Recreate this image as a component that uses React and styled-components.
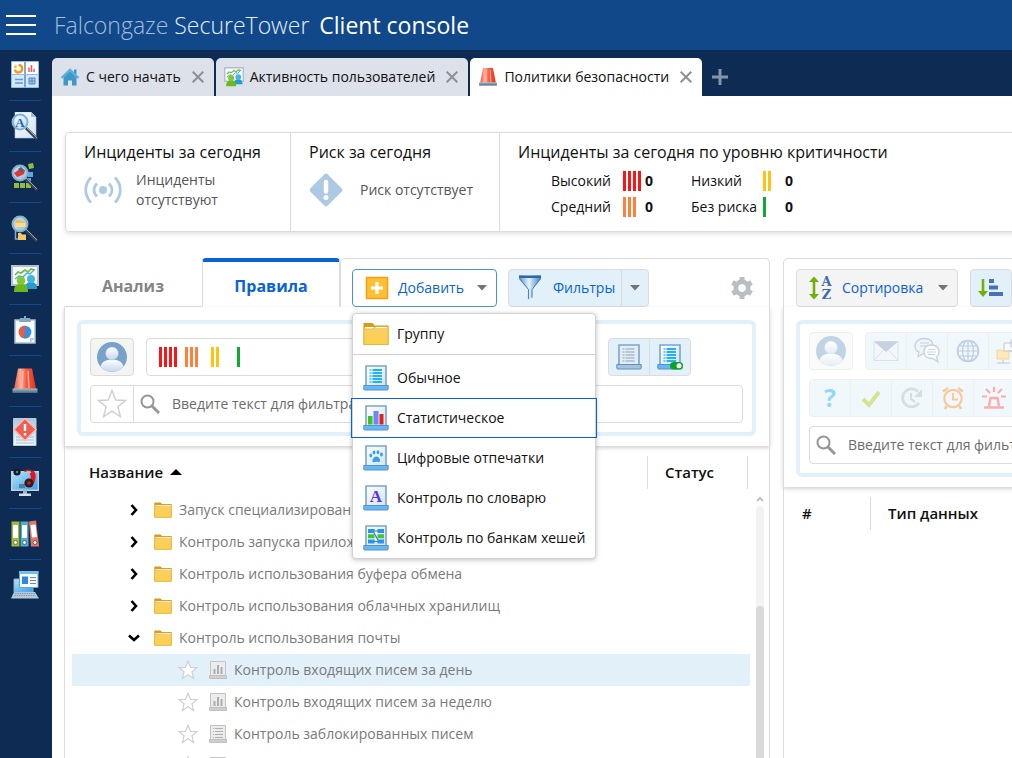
import {useState} from 'react';

import styled, {createGlobalStyle} from 'styled-components';

const colors = {
  header: '#10488a',
  navy: '#0e2c53',
  blue: '#0a62d8',
  pale: '#e2f0fa',
  line: '#dcdcdc',
  grey: '#7a7a7a',
  red: '#fb1616',
  orange: '#ff8039',
  yellow: '#ffc20e',
  green: '#0fab2f'
};

const GlobalStyle = createGlobalStyle`
  * {
    box-sizing: border-box;
  }
  body {
    margin: 0;
    overflow: hidden;
    font-family: 'Open Sans', 'Noto Sans', sans-serif;
    font-size: 14px;
    line-height: 20px;
    color: #111;
  }
  button, input {
    font: inherit;
    color: inherit;
  }
  button {
    padding: 0;
    border: 0;
    background: none;
    cursor: pointer;
  }
  svg {
    display: block;
    flex: none;
  }
`;

/* ---------- Icons ---------- */

const Svg = ({size = 28, box = 28, children}) => (
  <svg width={size} height={size} viewBox={`0 0 ${box} ${box}`} fill="none" aria-hidden="true">
    {children}
  </svg>
);

const HiddenSvg = styled.svg`
  position: absolute;
`;

const Defs = () => (
  <HiddenSvg width="0" height="0" aria-hidden="true">
    <defs>
      <linearGradient id="paper" x1="0" y1="0" x2="0" y2="1">
        <stop offset="0" stopColor="#a9c8e4" />
        <stop offset="1" stopColor="#f6fafd" />
      </linearGradient>
      <linearGradient id="sheet" x1="0" y1="0" x2="1" y2="1">
        <stop offset="0" stopColor="#ffffff" />
        <stop offset="1" stopColor="#cfe3f4" />
      </linearGradient>
      <linearGradient id="lens" x1="0" y1="0" x2="1" y2="1">
        <stop offset="0" stopColor="#f3fafe" />
        <stop offset="1" stopColor="#b5dcf4" />
      </linearGradient>
      <linearGradient id="folder" x1="0" y1="0" x2="0" y2="1">
        <stop offset="0" stopColor="#f6cf6a" />
        <stop offset="1" stopColor="#ffd04a" />
      </linearGradient>
      <linearGradient id="siren" x1="0" y1="0" x2="1" y2="0">
        <stop offset="0" stopColor="#f4553a" />
        <stop offset=".3" stopColor="#ffb09c" />
        <stop offset=".55" stopColor="#ff5b3f" />
        <stop offset="1" stopColor="#e23420" />
      </linearGradient>
      <linearGradient id="metal" x1="0" y1="0" x2="0" y2="1">
        <stop offset="0" stopColor="#9fc0d0" />
        <stop offset="1" stopColor="#47697c" />
      </linearGradient>
      <linearGradient id="screen" x1="0" y1="0" x2="1" y2="1">
        <stop offset="0" stopColor="#b8e2fb" />
        <stop offset="1" stopColor="#2fa0ea" />
      </linearGradient>
      <linearGradient id="funnel" x1="0" y1="0" x2="1" y2="0">
        <stop offset="0" stopColor="#5b96cc" />
        <stop offset=".45" stopColor="#e4f2fc" />
        <stop offset="1" stopColor="#3f7fbd" />
      </linearGradient>
      <linearGradient id="bust" x1="0" y1="0" x2="0" y2="1">
        <stop offset="0" stopColor="#ffffff" />
        <stop offset="1" stopColor="#c9d6ea" />
      </linearGradient>
    </defs>
  </HiddenSvg>
);

const Lens = ({cx = 9, cy = 10, r = 7.5}) => (
  <>
    <path d={`M${cx + 6} ${cy + 6}L26 27`} stroke="#3c4650" strokeWidth="3" />
    <path d={`M${cx + 6} ${cy + 5}L26 26`} stroke="#98a5b0" strokeWidth="1" />
    <circle cx={cx} cy={cy} r={r} fill="url(#lens)" fillOpacity=".85" stroke="#83b2d0" strokeWidth="2" />
  </>
);

const DashboardIcon = () => (
  <Svg>
    <path d="M1 1h12.500v12H1zM14.500 1H27v12H14.500z" fill="#fff" />
    <path d="M1 14h12.500v12H1zM14.500 14H27v12H14.500z" fill="#d5e7fa" />
    <path d="M.5 .5h27v26H.5zM14 1v25M1 13.500h26" stroke="#8dbdea" />
    <path d="M7.500 4a3.700 3.700 0 1 1-3.600 4.500" stroke="#f79a1a" strokeWidth="2.400" />
    <path d="M3.900 7A3.700 3.700 0 0 1 5.500 4.600" stroke="#f8c043" strokeWidth="2.400" />
    <path d="M18 6.500V11M20.500 4v7M23 8v3" stroke="#ee5663" strokeWidth="1.500" />
    <path d="M4 18.500h8M4 22h8" stroke="#5c9bd8" strokeWidth="1.400" />
    <path d="M18 17h6v6h-6zM18 20h6M21 17v6" stroke="#4c88c7" fill="#a8cdf0" />
  </Svg>
);

const SearchDocIcon = () => (
  <Svg>
    <path d="M4 0h16l5 5v21H4z" fill="url(#sheet)" stroke="#a9c3d8" strokeWidth=".6" />
    <path d="M20 0v5h5z" fill="#9dbfda" />
    <Lens />
    <text x="9" y="14.500" textAnchor="middle" fontFamily="Liberation Serif, serif" fontSize="13" fontWeight="700" fill="#2763b3">A</text>
  </Svg>
);

const SearchBlocksIcon = () => (
  <Svg>
    <path d="M3 20h5v5H3zM9 20h5v5H9zM15 20h5v5h-5zM17 1l5-1 1 5-5 1z" fill="#93bb3d" />
    <path d="M17 9h5v5h-5zM15 15h5v4h-5z" fill="#5fa5dd" />
    <Lens />
    <path d="M3 10l6-4 5 1-1 4-4 2-3 1z" fill="#e0372f" />
    <path d="M7 6l3-2 3 3-3 2z" fill="#4b627b" />
  </Svg>
);

const SearchFolderIcon = () => (
  <Svg>
    <path d="M4.500 12v13h4" stroke="#86adc9" strokeWidth="1.500" />
    <path d="M7 19h3l1 1.500h4V26H7z" fill="#f4ca66" />
    <Lens />
    <path d="M4.500 6h4l1 1.500h5V13h-10z" fill="#eebd4b" />
    <path d="M4.500 9h10v4h-10z" fill="#ffdc87" />
  </Svg>
);

const ActivityIcon = ({size}) => (
  <Svg size={size}>
    <path d="M1 1h26v19H1z" fill="#f4f9fd" stroke="#b3bfd0" strokeWidth="2" />
    <path d="M4 10l3-3 3 1 4-3 3 2 3-3 4 1" stroke="#74bb31" strokeWidth="1.600" />
    <path d="M4 14l4-3 4 1 4-4 3 1 4-4" stroke="#46b2de" strokeWidth="1.400" />
    <path d="M14 24c0-5 2-7 6-7s6 2 6 7z" fill="#259bcf" />
    <circle cx="20" cy="14" r="4" fill="#48b3e0" />
    <path d="M3 27c0-6 2-8 7-8s7 2 7 8z" fill="#6db71d" />
    <circle cx="10" cy="15.500" r="4.300" fill="#83c932" />
  </Svg>
);

const ReportIcon = () => (
  <Svg>
    <path d="M4 4h20v23H4z" fill="#fbfdff" stroke="#a9bfd2" strokeWidth="1.500" />
    <path d="M9 2h4V0h2v2h4l1 4H8z" fill="#84a8c4" />
    <circle cx="14" cy="16" r="6.300" fill="#2d93ea" />
    <path d="M14 9.700v6.300l4.500 4.400A6.300 6.300 0 1 1 14 9.700z" fill="#ef5a41" />
    <path d="M14 9.700v6.300l-1 6.300A6.300 6.300 0 0 0 18.500 20.400L20.300 16z" fill="#2d93ea" />
    <path d="M19 27v-5h5z" fill="#b8cbdc" />
  </Svg>
);

const SirenIcon = ({size}) => (
  <Svg size={size}>
    <path d="M7 1.500h14L25 22H3z" fill="url(#siren)" />
    <path d="M12 4l-1 17M17 4l1 17" stroke="#ffc2b3" strokeWidth="1.200" />
    <path d="M1.500 21.500h25V26h-25z" fill="url(#metal)" />
  </Svg>
);

const AlertDocIcon = () => (
  <Svg>
    <path d="M2.500 .5h22.500v27H2.500z" fill="url(#paper)" stroke="#b9c9d8" />
    <path d="M5 19h18M5 22h18M5 25h18" stroke="#9cbfdf" />
    <path d="M14 .5L25 11.500 14 22.500 3 11.500z" fill="#ef5f50" stroke="#fbb9b1" strokeWidth="1.400" />
    <path d="M14 6v7M14 15v2.500" stroke="#fff" strokeWidth="2.400" />
  </Svg>
);

const MonitorIcon = () => (
  <Svg>
    <path d="M.7 2.700h26.600v18.600H.7z" fill="url(#screen)" stroke="#c3d0da" strokeWidth="1.400" />
    <path d="M12 21h4v4h-4z" fill="#9fb3c1" />
    <path d="M8 24.500h12V27H8z" fill="#d6e0e8" />
    <circle cx="6" cy="3" r="3.600" fill="#151b22" />
    <circle cx="6" cy="3" r="1.200" fill="#4d86a6" />
    <path d="M8 15h6v4H8z" fill="#4d7f9f" />
    <path d="M13.500 2.500C17 .5 21 1 22.500 4.500" stroke="#b8252b" strokeWidth="1.600" />
    <path d="M20.500 3c3 3.500 1.500 9-1.500 13" stroke="#ee1119" strokeWidth="5" />
    <circle cx="18" cy="14" r="4.600" fill="#3c1714" />
    <circle cx="18" cy="14" r="1.800" fill="#a3362e" />
  </Svg>
);

const BindersIcon = () => (
  <Svg>
    <path d="M.5 1.500h8v25h-8z" fill="#a4b83a" />
    <path d="M9.500 1.500h8v25h-8z" fill="#50aecf" />
    <path d="M18 1.500l7-1 3 26h-8z" fill="#e2766a" />
    <path d="M2 5h5v13H2zM11 5h5v13h-5zM19.500 5l5-.6 1.500 12.600-5 .5z" fill="#fff" />
    <circle cx="4.500" cy="22.500" r="2" fill="#fff" stroke="#6c7c3a" />
    <circle cx="13.500" cy="22.500" r="2" fill="#fff" stroke="#386f88" />
    <circle cx="24" cy="22.500" r="2" fill="#fff" stroke="#93473f" />
  </Svg>
);

const LaptopIcon = () => (
  <Svg>
    <path d="M3 8h19v13H3z" fill="url(#screen)" stroke="#8eabc1" />
    <path d="M3 21h21l4 6.500H0z" fill="#b4c9da" />
    <path d="M4 22.500h20M3.500 24.500h21" stroke="#7f9bb2" strokeDasharray="1.500 .8" />
    <path d="M8.500 .5h18.500v16H8.500z" fill="#f7fbfe" stroke="#63a6de" />
    <path d="M8 0h19.500v3H8z" fill="#77bbef" />
    <path d="M11 5.500h6V13h-6z" fill="#2f86e0" />
    <path d="M19 6.500h6M19 9.500h6M19 12.500h6" stroke="#74899c" strokeWidth="1.200" />
  </Svg>
);

const HomeIcon = () => (
  <Svg size={20} box={20}>
    <path d="M14 2.500h2.500V7H14zM3.500 10L10 4l6.500 6v8.500h-4.500v-5H8v5H3.500z" fill="#3f98c6" />
    <path d="M1.500 11L10 3l8.500 8" stroke="#5db0da" strokeWidth="2.400" />
  </Svg>
);

const CloseIcon = () => (
  <Svg size={12} box={12}>
    <path d="M.7 .7l10.600 10.600M11.300 .7L.7 11.300" stroke="#8d8f93" strokeWidth="2" />
  </Svg>
);

const PlusIcon = () => (
  <Svg size={16} box={16}>
    <path d="M8 0v16M0 8h16" stroke="#8594a9" strokeWidth="3" />
  </Svg>
);

const SignalIcon = () => (
  <svg width="38" height="28" viewBox="0 0 38 28" fill="none" stroke="#adc9e3" strokeWidth="2.800" aria-hidden="true">
    <circle cx="19" cy="14" r="4" fill="#adc9e3" stroke="none" />
    <path d="M13 7.500c-4 4-4 9 0 13M25 7.500c4 4 4 9 0 13M7 1.500c-7 7-7 18 0 25M31 1.500c7 7 7 18 0 25" />
  </svg>
);

const RiskIcon = () => (
  <Svg size={34} box={34}>
    <path d="M15.500 1.200q1.500-1.200 3 0L32.800 15.500q1.200 1.500 0 3L18.500 32.800q-1.500 1.200-3 0L1.200 18.500q-1.200-1.500 0-3z" fill="#adc9e3" />
    <path d="M17 9v9.500" stroke="#fff" strokeWidth="4.500" strokeLinecap="round" />
    <circle cx="17" cy="24.500" r="2.500" fill="#fff" />
  </Svg>
);

const AddIcon = () => (
  <Svg size={24} box={24}>
    <path d="M1.500 1.500h21v21h-21z" fill="#ffc12f" stroke="#f3a01c" strokeWidth="1.600" />
    <path d="M12 6v12M6 12h12" stroke="#fff" strokeWidth="3.200" />
  </Svg>
);

const FunnelIcon = () => (
  <svg width="22" height="26" viewBox="0 0 22 26" fill="none" aria-hidden="true">
    <path d="M0 .5h22v3.500L13.500 14.500v8L10 25.500l-1.500-1V14.500L0 4z" fill="url(#funnel)" />
    <path d="M0 .5h22V3H0z" fill="#2e68a8" />
    <path d="M1 4l8.500 10.500V24M21 4l-8 10.500v8" stroke="#4482bd" />
  </svg>
);

const CaretIcon = ({color = '#737373'}) => (
  <svg width="10" height="6" viewBox="0 0 10 6" aria-hidden="true">
    <path d="M0 0h10L5 5.500z" fill={color} />
  </svg>
);

const FolderIcon = ({size = 26}) => (
  <Svg size={size} box={26}>
    <path d="M.5 2h9l2 2.500h14V24H.5z" fill="#d99b16" />
    <path d="M2 6h22v3H2z" fill="#fff" />
    <path d="M1 8h9l2-2h13v17.500H1z" fill="url(#folder)" stroke="#e9b541" />
    <path d="M12.500 6.500H24" stroke="#fff" />
  </Svg>
);

//Sheet on a stand, the marks on the sheet depend on the rule kind
const marks = {
  plain: (
    <>
      <path d="M6.500 5h2M6.500 8h2M6.500 11h2M6.500 14h2M6.500 17h2" stroke="#4cbef2" strokeWidth="1.300" />
      <path d="M9.500 5h9.500M9.500 8h9.500M9.500 11h9.500M9.500 14h9.500M9.500 17h9.500" stroke="#22b1f6" strokeWidth="2" />
    </>
  ),
  muted: (
    <path d="M6.500 5h2M9.500 5h9M6.500 8h2M9.500 8h9M6.500 11h2M9.500 11h9M6.500 14h2M9.500 14h9M6.500 17h2M9.500 17h9" stroke="#8ba1b4" strokeWidth="1.200" />
  ),
  stats: (
    <>
      <path d="M5 11h4.500v8.500H5z" fill="#3fc01e" />
      <path d="M10.500 6h5v13.500h-5z" fill="#6f86f8" />
      <path d="M16.500 9h4v10.500h-4z" fill="#e02222" />
    </>
  ),
  paw: (
    <g fill="#3c9eea">
      <ellipse cx="7.800" cy="10.500" rx="1.400" ry="1.900" />
      <ellipse cx="11" cy="7.500" rx="1.400" ry="2" />
      <ellipse cx="15" cy="7.200" rx="1.400" ry="2" />
      <ellipse cx="18.500" cy="9.500" rx="1.400" ry="1.900" />
      <path d="M13.300 11.500c2.500 0 4.200 3 3.800 4.500-.5 1.600-2.300.8-3.800.8s-3.300 1.400-3.800-.4c-.4-1.500 1.300-4.900 3.800-4.900z" />
    </g>
  ),
  letter: (
    <text x="13" y="16.500" textAnchor="middle" fontFamily="Liberation Serif, serif" fontSize="17" fontWeight="700" fill="#5b35e0">A</text>
  ),
  hash: (
    <>
      <path d="M5 4h6.500v4H5zM14.500 4H21v4h-6.500zM5 14.500h6.500v4H5zM14.500 14.500H21v4h-6.500z" fill="#2694f3" />
      <path d="M5 9.200h6.500v4H5zM14.500 9.200H21v4h-6.500z" fill="#46c32f" />
      <path d="M11 6h4M11 16.500h4M11 8l4 7" stroke="#3c7fb0" strokeWidth="1.200" />
    </>
  )
};

const RuleIcon = ({kind, muted, toggle}) => (
  <Svg size={26} box={26}>
    <path d="M3 1h20v20H3z" fill={muted ? '#e3edf5' : 'url(#sheet)'} stroke="#7ba5c9" strokeWidth="1.600" />
    {marks[kind]}
    <path d="M.8 20.500h24.400V24q0 1-1 1H1.800q-1 0-1-1z" fill={muted ? '#a9c3da' : '#64b7f8'} stroke="#5a92c2" />
    {toggle && (
      <>
        <rect x="13" y="18" width="13" height="7.500" rx="3.700" fill="#0aa51c" />
        <circle cx="22" cy="21.700" r="2.500" fill="#fff" />
      </>
    )}
  </Svg>
);

const SmallRuleIcon = ({kind}) => (
  <Svg size={18} box={18}>
    <path d="M1.500 .5h15v14h-15z" fill="#ececec" stroke="#c4c4c4" />
    {kind === 'stats' ? (
      <path d="M5.500 8v5M9 4v9M12.500 6v7" stroke="#adadad" strokeWidth="2" />
    ) : (
      <path d="M4 3.500h1M6 3.500h8M4 6.500h1M6 6.500h8M4 9.500h1M6 9.500h8M4 12.500h1M6 12.500h8" stroke="#b0b0b0" />
    )}
    <path d="M.5 14.500h17v3H.5z" fill="#cfcfcf" stroke="#c0c0c0" />
  </Svg>
);

const StarIcon = ({size, width = 1}) => (
  <Svg size={size} box={20}>
    <path d="M10 1l2.500 6.300 6.500.3-5.100 4.200 1.700 6.600L10 14.800l-5.600 3.600 1.700-6.600L1 7.600l6.500-.3z" fill="#fff" stroke="#d0d0d0" strokeWidth={width} />
  </Svg>
);

const SearchIcon = () => (
  <Svg size={20} box={20}>
    <circle cx="7.500" cy="7.500" r="6" stroke="#969696" strokeWidth="2" />
    <path d="M12 12l7 7" stroke="#969696" strokeWidth="3" />
  </Svg>
);

const AvatarIcon = () => (
  <Svg size={30} box={30}>
    <circle cx="15" cy="15" r="15" fill="#78a2ca" />
    <path d="M3.500 24.500C5 19.500 9 17.500 15 17.500s10 2 11.500 7A15 15 0 0 1 3.500 24.500z" fill="url(#bust)" />
    <circle cx="15" cy="11.500" r="6.500" fill="url(#bust)" stroke="#9dbbda" strokeWidth=".5" />
  </Svg>
);

const GearIcon = () => (
  <Svg size={22} box={22}>
    <circle cx="11" cy="11" r="6" stroke="#b7bfc5" strokeWidth="5" />
    <path d="M11 0v5M11 17v5M1.500 5.500l4.300 2.500M16.200 14l4.300 2.500M1.500 16.500L5.800 14M16.200 8l4.300-2.500" stroke="#b7bfc5" strokeWidth="5" />
    <circle cx="11" cy="11" r="3.700" fill="#fff" />
  </Svg>
);

const SortIcon = () => (
  <Svg size={24} box={24}>
    <path d="M5 4v16" stroke="#77ad08" strokeWidth="2.600" />
    <path d="M0 6l5-5.500L10 6zM0 18l5 5.500 5-5.500z" fill="#77ad08" />
    <text x="17.500" y="10" textAnchor="middle" fontFamily="DejaVu Serif, serif" fontSize="13" fontWeight="700" fill="#3d6cad">A</text>
    <text x="17.500" y="23" textAnchor="middle" fontFamily="DejaVu Serif, serif" fontSize="13" fontWeight="700" fill="#3d6cad">Z</text>
  </Svg>
);

const OrderIcon = () => (
  <Svg size={26} box={26}>
    <path d="M5 4v15" stroke="#77ad08" strokeWidth="2.600" />
    <path d="M0 16l5 6 5-6z" fill="#77ad08" />
    <path d="M11 4h5v4h-5zM11 10.500h9v4h-9zM11 17h14v4H11z" fill="#4474b5" />
  </Svg>
);

const MailIcon = () => (
  <Svg size={26} box={26}>
    <path d="M1 3.500h24v19H1z" fill="#e6eff7" stroke="#a9bfd4" />
    <path d="M1 3.500h24L13 14z" fill="#7f9dbb" />
    <path d="M1 22.500l9-10M25 22.500l-9-10" stroke="#a9bfd4" />
  </Svg>
);

const ChatIcon = () => (
  <Svg size={28}>
    <path d="M11 1.500c6 0 9 3 9 7.500s-4 7.500-9 7.500l-6 3 1-4.500C3 14 2 11 2 9c0-4.500 4-7.500 9-7.500z" fill="#dfeaf5" stroke="#7c9dc0" strokeWidth="1.300" />
    <path d="M7 6h9M7 9h6" stroke="#7c9dc0" />
    <path d="M18 8c5 0 8 2.500 8 7 0 2-1 4-2.500 5l1.500 5-5-3.500c-5.500 0-9-2-9-6.500S13 8 18 8z" fill="#fff" stroke="#7c9dc0" strokeWidth="1.300" />
    <path d="M15 12.500h7M14 15h9M15 17.500h7" stroke="#7c9dc0" />
  </Svg>
);

const GlobeIcon = () => (
  <Svg size={24} box={24}>
    <circle cx="12" cy="12" r="10.500" fill="#dbe9f6" stroke="#6c94be" strokeWidth="1.600" />
    <path d="M12 1.500v21M1.500 12h21M3 7h18M3 17h18" stroke="#6c94be" strokeWidth="1.200" />
    <ellipse cx="12" cy="12" rx="5.500" ry="10.500" stroke="#6c94be" strokeWidth="1.200" />
  </Svg>
);

const NetworkIcon = () => (
  <Svg size={26} box={26}>
    <path d="M15 2h10v7H15zM8 5h10v8H8z" fill="#eef4f9" stroke="#73869a" />
    <path d="M13 13h8v8M7 22v3M1 25h13" stroke="#73869a" />
    <path d="M1 12h5l1 1.500h6V21H1z" fill="#ffcf63" stroke="#e0a02c" />
  </Svg>
);

const QuestionIcon = () => (
  <Svg size={24} box={24}>
    <text x="12" y="21" textAnchor="middle" fontFamily="Open Sans, sans-serif" fontSize="25" fontWeight="700" fill="#12a9f2">?</text>
  </Svg>
);

const CheckIcon = () => (
  <Svg size={24} box={24}>
    <path d="M4 13l6 6L20 6" stroke="#a0c614" strokeWidth="4" />
  </Svg>
);

const RetryIcon = () => (
  <Svg size={24} box={24}>
    <path d="M19 17A9 9 0 1 1 18 5.500" stroke="#a9b3c2" strokeWidth="2.800" />
    <path d="M22 3v8h-8z" fill="#a9b3c2" />
    <path d="M11 7v6l4 3" stroke="#a9b3c2" strokeWidth="2.200" />
  </Svg>
);

const AlarmIcon = () => (
  <Svg size={24} box={24}>
    <circle cx="12" cy="12.500" r="8.700" stroke="#f08a1e" strokeWidth="2.200" />
    <path d="M12 7v6.500h5" stroke="#f08a1e" strokeWidth="2" />
    <path d="M2 5.500L7 2M22 5.500L17 2M5.500 20L4 23M18.500 20l1.500 3" stroke="#f08a1e" strokeWidth="2.600" />
  </Svg>
);

const SirenLineIcon = () => (
  <Svg size={24} box={24}>
    <path d="M7 20l1.500-8h7l1.500 8M2 21.500h20" stroke="#fa4a4a" strokeWidth="2.400" />
    <path d="M12 1v5M4 3l4 4M20 3l-4 4M0 10.500h5M19 10.500h5" stroke="#fa4a4a" strokeWidth="2.200" />
  </Svg>
);

/* ---------- Frame ---------- */

const Page = styled.div`
  display: flex;
  flex-direction: column;
  height: 100vh;
  overflow: hidden;
  background: ${colors.navy};
`;

const Header = styled.header`
  display: flex;
  align-items: center;
  gap: 18px;
  height: 50px;
  flex: none;
  padding: 0 6px;
  background: ${colors.header};
`;

const Burger = styled.button`
  display: flex;
  flex-direction: column;
  gap: 7px;
  width: 30px;

  span {
    height: 2px;
    background: #fff;
  }
`;

const Brand = styled.h1`
  margin: 0;
  font-size: 23px;
  font-weight: 300;
  line-height: 32px;
  white-space: nowrap;
  color: #e4eefa;

  span {
    color: #a4bddb;
  }
  b {
    margin-left: 4px;
    font-weight: 400;
    color: #fff;
  }
`;

const Body = styled.div`
  display: flex;
  flex: 1;
  min-height: 0;
`;

const Sidebar = styled.nav`
  display: flex;
  flex-direction: column;
  align-items: center;
  flex: none;
  width: 52px;
  padding-right: 2px;
`;

const NavButton = styled.button`
  display: flex;
  align-items: center;
  justify-content: center;
  width: 32px;
  height: 51px;
  border-bottom: 1px solid ${({$last}) => ($last ? 'transparent' : '#124a91')};
`;

const Workspace = styled.div`
  display: flex;
  flex-direction: column;
  flex: 1;
  min-width: 0;
`;

const TabBar = styled.div`
  display: flex;
  align-items: flex-end;
  gap: 2px;
  flex: none;
  height: 46px;
`;

const Tab = styled.div`
  display: flex;
  align-items: center;
  gap: 11px;
  height: 38px;
  padding: 0 10px 0 8px;
  border-radius: 5px 5px 0 0;
  background: ${({$active}) => ($active ? '#fff' : '#dde1e9')};
`;

const TabLabel = styled.button`
  display: flex;
  align-items: center;
  gap: 6px;
  white-space: nowrap;
`;

const NewTab = styled.button`
  display: flex;
  align-items: center;
  height: 38px;
  padding: 0 8px;
`;

const Content = styled.main`
  display: flex;
  flex-direction: column;
  gap: 26px;
  flex: 1;
  min-height: 0;
  padding: 36px 0 0 12px;
  overflow: hidden;
  background: #fff;
`;

/* ---------- Summary ---------- */

const Summary = styled.section`
  display: grid;
  grid-template-columns: 224px 209px minmax(700px, 1fr);
  flex: none;
  min-width: 1135px;
  height: 100px;
  margin-left: 1px;
  border: 1px solid ${colors.line};
  border-radius: 4px;
  box-shadow: 0 2px 5px rgba(0, 0, 0, 0.12);
`;

const SummaryCell = styled.div`
  padding: 7px 18px;

  & + & {
    border-left: 1px solid ${colors.line};
  }
`;

const SummaryTitle = styled.h2`
  margin: 0;
  font-size: 16px;
  font-weight: 400;
  line-height: 24px;
  white-space: nowrap;
`;

const SummaryNote = styled.div`
  display: flex;
  align-items: center;
  gap: ${({$gap}) => $gap}px;
  height: 52px;
  color: #555;
`;

const Levels = styled.dl`
  display: grid;
  grid-template-columns: 72px 22px 46px 72px 22px auto;
  align-items: center;
  grid-auto-rows: 26px;
  margin: 4px 0 0 33px;

  dt {
    white-space: nowrap;
  }
  dd {
    margin: 0;
    font-weight: 700;
  }
`;

const BarGroup = styled.span`
  display: flex;
  gap: 2px;

  i {
    width: 3px;
    height: 20px;
    background: ${({$color}) => $color};
  }
`;

const Bars = ({count, color}) => (
  <BarGroup $color={color}>
    {Array.from({length: count}, (_, i) => (
      <i key={i} />
    ))}
  </BarGroup>
);

/* ---------- Panels ---------- */

const Panels = styled.div`
  display: grid;
  grid-template-columns: minmax(706px, 3fr) minmax(480px, 2fr);
  gap: 13px;
  flex: 1;
  min-height: 0;
`;

const Panel = styled.section`
  display: flex;
  flex-direction: column;
  min-height: 0;
`;

const PanelTop = styled.div`
  display: flex;
  flex: none;
  height: 49px;
`;

const PanelTab = styled.button`
  width: 138px;
  padding-top: ${({$active}) => ($active ? '3px' : '7px')};
  font-size: 16px;
  font-weight: 700;
  color: ${({$active}) => ($active ? colors.blue : '#858585')};
  border: 1px solid ${({$active}) => ($active ? colors.line : 'transparent')};
  border-top: ${({$active}) => ($active ? `4px solid ${colors.blue}` : '0')};
  border-bottom-color: ${({$active}) => ($active ? '#fff' : colors.line)};
  border-radius: 4px 4px 0 0;
`;

const Toolbar = styled.div`
  display: flex;
  align-items: flex-end;
  gap: ${({$gap}) => $gap}px;
  flex: 1;
  padding: 0 16px 0 ${({$gap}) => $gap}px;
  border: 1px solid ${colors.line};
  border-bottom: 0;
  border-radius: 5px 5px 0 0;
`;

const ToolButton = styled.button`
  display: flex;
  align-items: center;
  gap: ${({$gap}) => $gap || 9}px;
  height: 38px;
  padding: 0 ${({$square}) => ($square ? 7 : 9)}px 0 ${({$square}) => ($square ? 7 : 12)}px;
  white-space: nowrap;
  color: ${colors.blue};
  border: 1px solid ${({$open}) => ($open ? '#4a8fe2' : colors.line)};
  border-radius: 4px;
  background: ${({$tone}) => $tone || '#fff'};
`;

const CaretSlot = styled.span`
  padding-left: ${({$space}) => $space}px;
`;

const SplitButton = styled.div`
  display: flex;
  height: 38px;
  border: 1px solid ${colors.line};
  border-radius: 4px;
  background: ${colors.pale};
`;

const SplitMain = styled.button`
  display: flex;
  align-items: center;
  gap: 12px;
  padding: 0 6px 0 10px;
  color: ${colors.blue};
`;

const SplitCaret = styled.button`
  display: flex;
  align-items: center;
  padding: 0 8px;
  border-left: 1px solid ${colors.line};
`;

const GearButton = styled.button`
  margin: 0 0 8px auto;
`;

const PanelFilters = styled.div`
  flex: none;
  padding: 13px 13px 10px 12px;
  border: solid ${colors.line};
  border-width: 0 1px;
  box-shadow: 0 2px 4px rgba(0, 0, 0, 0.18);
`;

const FilterBox = styled.div`
  display: flex;
  flex-direction: column;
  gap: 9px;
  padding: ${({$top}) => $top}px 9px 9px;
  border: 4px solid ${colors.pale};
  border-radius: 6px;
`;

const FilterRow = styled.div`
  display: flex;
  gap: 12px;
  height: 38px;
  opacity: ${({$faded}) => ($faded ? 0.45 : 1)};
`;

const AvatarButton = styled.button`
  display: flex;
  align-items: center;
  justify-content: center;
  width: 44px;
  border: 1px solid ${colors.line};
  border-radius: 4px;
  background: #f4f4f4;
`;

const LevelBox = styled.div`
  display: flex;
  align-items: center;
  flex: 1;
  padding-left: 12px;
  border: 1px solid ${colors.line};
  border-radius: 4px;

  button {
    width: 26px;
  }
`;

const ButtonGroup = styled.div`
  display: flex;
  margin-right: ${({$indent}) => $indent || 0}px;
  border: 1px solid ${colors.line};
  border-radius: 4px;
  background: ${colors.pale};

  button {
    display: flex;
    align-items: center;
    justify-content: center;
    width: 40px;
  }
  button + button {
    width: 41px;
    border-left: 1px solid ${colors.line};
  }
`;

const SearchField = styled.div`
  display: flex;
  flex: 1;
  border: 1px solid ${colors.line};
  border-radius: 4px;

  > button {
    display: flex;
    align-items: center;
    justify-content: center;
    width: 43px;
    border-right: 1px solid ${colors.line};
  }
  label {
    display: flex;
    align-items: center;
    gap: 12px;
    flex: 1;
    padding-left: 6px;
  }
  input {
    flex: 1;
    min-width: 0;
    padding: 0;
    border: 0;
    outline: 0;
    background: none;
  }
  input::placeholder {
    color: #6c6c6c;
    opacity: 1;
  }
`;

const PanelBody = styled.div`
  display: flex;
  flex: 1;
  min-height: 0;
  overflow: hidden;
  padding-left: 7px;
  border: solid ${colors.line};
  border-width: 0 1px;
`;

const Grid = styled.table`
  flex: 1;
  align-self: flex-start;
  border-collapse: collapse;
  table-layout: fixed;

  th {
    height: 48px;
    padding: 4px 0 0;
    text-align: left;
    font-size: 15px;
    font-weight: 600;
  }
  td {
    height: 32px;
    padding: 0;
    color: ${colors.grey};
  }
`;

const HeadCell = styled.div`
  display: flex;
  align-items: center;
  gap: 7px;
  height: 33px;
  padding-left: ${({$inset}) => $inset || 17}px;
  border: 0 solid ${colors.line};
  border-width: ${({$lines}) => $lines || '0'};
  width: ${({$width}) => $width || 'auto'};
`;

const TreeRow = styled.tr`
  background: ${({$selected}) => ($selected ? colors.pale : 'transparent')};
`;

const TreeCell = styled.div`
  display: flex;
  align-items: center;
  gap: 7px;
  padding-left: ${({$child}) => ($child ? 106 : 55)}px;
  white-space: nowrap;

  > button {
    display: flex;
    justify-content: center;
    width: 20px;
    margin-right: ${({$child}) => ($child ? 4 : 0)}px;
  }
  > button svg {
    margin-right: ${({$child}) => ($child ? 0 : 6)}px;
  }
`;

const ScrollBar = styled.div`
  display: flex;
  flex-direction: column;
  align-items: center;
  gap: 4px;
  width: 19px;
  padding-top: 50px;
`;

const ScrollTrack = styled.div`
  flex: 1;
  width: 8px;
  padding-top: 100px;
  border-radius: 4px 4px 0 0;
  background: #f3f3f3;
`;

const ScrollThumb = styled.div`
  height: 100%;
  border-radius: 4px 4px 0 0;
  background: #dadada;
`;

/* ---------- Menu ---------- */

const MenuAnchor = styled.div`
  position: relative;
`;

const Menu = styled.div`
  position: absolute;
  top: 44px;
  left: 0;
  z-index: 2;
  width: 244px;
  border: 1px solid #d2d2d2;
  border-radius: 4px;
  background: #fff;
  box-shadow: 0 1px 5px rgba(0, 0, 0, 0.25);

  hr {
    margin: 0 0 3px;
    border: 0;
    border-top: 1px solid #d2d2d2;
  }
`;

const MenuItem = styled.button`
  display: flex;
  align-items: center;
  gap: 8px;
  width: 246px;
  height: 40px;
  margin: 0 -2px;
  padding-left: 11px;
  white-space: nowrap;
  border: 1px solid ${({$current}) => ($current ? colors.blue : 'transparent')};
`;

/* ---------- Data ---------- */

const navItems = [
  ['Обзор', DashboardIcon],
  ['Поиск', SearchDocIcon],
  ['Комбинированный поиск', SearchBlocksIcon],
  ['Поиск файлов', SearchFolderIcon],
  ['Активность', ActivityIcon],
  ['Отчеты', ReportIcon],
  ['Безопасность', SirenIcon],
  ['Инциденты', AlertDocIcon],
  ['Наблюдение', MonitorIcon],
  ['Расследования', BindersIcon],
  ['Рабочие станции', LaptopIcon]
];

const tabs = [
  ['С чего начать', HomeIcon],
  ['Активность пользователей', ActivityIcon],
  ['Политики безопасности', SirenIcon]
];

const levels = [
  ['Высокий', 4, colors.red],
  ['Низкий', 2, colors.yellow],
  ['Средний', 3, colors.orange],
  ['Без риска', 1, colors.green]
];

const filterLevels = [levels[0], levels[2], levels[1], levels[3]];

const ruleKinds = [
  ['Обычное', 'plain'],
  ['Статистическое', 'stats'],
  ['Цифровые отпечатки', 'paw'],
  ['Контроль по словарю', 'letter'],
  ['Контроль по банкам хешей', 'hash']
];

const folders = [
  'Запуск специализированных программ',
  'Контроль запуска приложений',
  'Контроль использования буфера обмена',
  'Контроль использования облачных хранилищ',
  'Контроль использования почты'
];

const rules = [
  ['Контроль входящих писем за день', 'stats'],
  ['Контроль входящих писем за неделю', 'stats'],
  ['Контроль заблокированных писем', 'plain'],
  ['Контроль исходящих писем', 'plain']
];

const sources = [
  ['Почта', MailIcon],
  ['Чаты', ChatIcon],
  ['Веб', GlobeIcon],
  ['Сеть', NetworkIcon]
];

const states = [
  ['Не проверено', QuestionIcon],
  ['Проверено', CheckIcon],
  ['Повторно', RetryIcon],
  ['Отложено', AlarmIcon],
  ['Тревога', SirenLineIcon]
];

const Chevron = ({open}) => (
  <Svg size={12} box={12}>
    <path d={open ? 'M1 3.500l5 4.500 5-4.500' : 'M3.500 1L8 6l-4.500 5'} stroke="#000" strokeWidth="2.600" />
  </Svg>
);

const AddMenu = () => {
  const [open, setOpen] = useState(true);
  const [current, setCurrent] = useState('stats');

  return (
    <MenuAnchor>
      <ToolButton $open={open} aria-haspopup="menu" aria-expanded={open} onClick={() => setOpen(!open)}>
        <AddIcon />
        Добавить
        <CaretSlot $space={4}>
          <CaretIcon />
        </CaretSlot>
      </ToolButton>
      {open && (
        <Menu role="menu">
          <MenuItem role="menuitem">
            <FolderIcon />
            Группу
          </MenuItem>
          <hr />
          {ruleKinds.map(([label, kind]) => (
            <MenuItem
              key={kind}
              role="menuitem"
              $current={kind === current}
              onMouseEnter={() => setCurrent(kind)}>
              <RuleIcon kind={kind} />
              {label}
            </MenuItem>
          ))}
        </Menu>
      )}
    </MenuAnchor>
  );
};

const RulesPanel = () => {
  const [selected, setSelected] = useState(0);

  return (
    <Panel>
      <PanelTop>
        <PanelTab>Анализ</PanelTab>
        <PanelTab $active>Правила</PanelTab>
        <Toolbar $gap={11}>
          <AddMenu />
          <SplitButton>
            <SplitMain>
              <FunnelIcon />
              Фильтры
            </SplitMain>
            <SplitCaret aria-label="Выбрать фильтр">
              <CaretIcon />
            </SplitCaret>
          </SplitButton>
          <GearButton aria-label="Настройки">
            <GearIcon />
          </GearButton>
        </Toolbar>
      </PanelTop>
      <PanelFilters>
        <FilterBox $top={14}>
          <FilterRow>
            <AvatarButton aria-label="Пользователь">
              <AvatarIcon />
            </AvatarButton>
            <LevelBox>
              {filterLevels.map(([label, count, color]) => (
                <button key={label} aria-label={label}>
                  <Bars count={count} color={color} />
                </button>
              ))}
            </LevelBox>
            <ButtonGroup $indent={52}>
              <button aria-label="Отключенные">
                <RuleIcon kind="muted" muted />
              </button>
              <button aria-label="Включенные">
                <RuleIcon kind="plain" toggle />
              </button>
            </ButtonGroup>
          </FilterRow>
          <FilterRow>
            <SearchField>
              <button aria-label="Избранное">
                <StarIcon size={30} />
              </button>
              <label>
                <SearchIcon />
                <input aria-label="Фильтр правил" placeholder="Введите текст для фильтрации" />
              </label>
            </SearchField>
          </FilterRow>
        </FilterBox>
      </PanelFilters>
      <PanelBody>
        <Grid>
          <colgroup>
            <col />
            <col width="103" />
          </colgroup>
          <thead>
            <tr>
              <th>
                <HeadCell>
                  Название
                  <svg width="12" height="6" viewBox="0 0 12 6" aria-hidden="true">
                    <path d="M6 0l6 6H0z" fill="#000" />
                  </svg>
                </HeadCell>
              </th>
              <th>
                <HeadCell $lines="0 1px" $width="101px">
                  Статус
                </HeadCell>
              </th>
            </tr>
          </thead>
          <tbody>
            {folders.map((name, i) => (
              <TreeRow key={name}>
                <td colSpan={2}>
                  <TreeCell>
                    <button aria-label="Развернуть">
                      <Chevron open={i === folders.length - 1} />
                    </button>
                    <FolderIcon size={18} />
                    {name}
                  </TreeCell>
                </td>
              </TreeRow>
            ))}
            {rules.map(([name, kind], i) => (
              <TreeRow key={name} $selected={i === selected} onClick={() => setSelected(i)}>
                <td colSpan={2}>
                  <TreeCell $child>
                    <button aria-label="В избранное">
                      <StarIcon size={20} width={1.2} />
                    </button>
                    <SmallRuleIcon kind={kind} />
                    {name}
                  </TreeCell>
                </td>
              </TreeRow>
            ))}
          </tbody>
        </Grid>
        <ScrollBar>
          <svg width="8" height="6" viewBox="0 0 8 6" fill="none" aria-hidden="true">
            <path d="M1 5l3-3 3 3" stroke="#b5b5b5" strokeWidth="1.600" />
          </svg>
          <ScrollTrack>
            <ScrollThumb />
          </ScrollTrack>
        </ScrollBar>
      </PanelBody>
    </Panel>
  );
};

const IncidentsPanel = () => (
  <Panel>
    <PanelTop>
      <Toolbar $gap={12}>
        <ToolButton $tone="#f4f4f4">
          <SortIcon />
          Сортировка
          <CaretSlot $space={6}>
            <CaretIcon />
          </CaretSlot>
        </ToolButton>
        <ToolButton $tone={colors.pale} $square aria-label="По возрастанию">
          <OrderIcon />
        </ToolButton>
      </Toolbar>
    </PanelTop>
    <PanelFilters>
      <FilterBox $top={8}>
        <FilterRow $faded>
          <AvatarButton aria-label="Пользователь">
            <AvatarIcon />
          </AvatarButton>
          <ButtonGroup>
            {sources.map(([label, Icon]) => (
              <button key={label} aria-label={label}>
                <Icon />
              </button>
            ))}
          </ButtonGroup>
        </FilterRow>
        <FilterRow $faded>
          <ButtonGroup>
            {states.map(([label, Icon]) => (
              <button key={label} aria-label={label}>
                <Icon />
              </button>
            ))}
          </ButtonGroup>
        </FilterRow>
        <FilterRow>
          <SearchField>
            <label>
              <SearchIcon />
              <input aria-label="Фильтр инцидентов" placeholder="Введите текст для фильтрации" />
            </label>
          </SearchField>
        </FilterRow>
      </FilterBox>
    </PanelFilters>
    <PanelBody>
      <Grid>
        <colgroup>
          <col width="79" />
          <col />
        </colgroup>
        <thead>
          <tr>
            <th>
              <HeadCell $inset={11}>#</HeadCell>
            </th>
            <th>
              <HeadCell $lines="0 0 0 1px">Тип данных</HeadCell>
            </th>
          </tr>
        </thead>
      </Grid>
    </PanelBody>
  </Panel>
);

const App = () => (
  <Page>
    <GlobalStyle />
    <Defs />
    <Header>
      <Burger aria-label="Меню">
        <span />
        <span />
        <span />
      </Burger>
      <Brand>
        <span>Falcongaze</span> SecureTower <b>Client console</b>
      </Brand>
    </Header>
    <Body>
      <Sidebar>
        {navItems.map(([label, Icon], i) => (
          <NavButton key={label} aria-label={label} $last={i === navItems.length - 1}>
            <Icon />
          </NavButton>
        ))}
      </Sidebar>
      <Workspace>
        <TabBar>
          {tabs.map(([label, Icon], i) => (
            <Tab key={label} $active={i === tabs.length - 1}>
              <TabLabel>
                <Icon size={20} />
                {label}
              </TabLabel>
              <button aria-label={`Закрыть ${label}`}>
                <CloseIcon />
              </button>
            </Tab>
          ))}
          <NewTab aria-label="Новая вкладка">
            <PlusIcon />
          </NewTab>
        </TabBar>
        <Content>
          <Summary>
            <SummaryCell>
              <SummaryTitle>Инциденты за сегодня</SummaryTitle>
              <SummaryNote $gap={14}>
                <SignalIcon />
                <span>
                  Инциденты
                  <br />
                  отсутствуют
                </span>
              </SummaryNote>
            </SummaryCell>
            <SummaryCell>
              <SummaryTitle>Риск за сегодня</SummaryTitle>
              <SummaryNote $gap={17}>
                <RiskIcon />
                Риск отсутствует
              </SummaryNote>
            </SummaryCell>
            <SummaryCell>
              <SummaryTitle>Инциденты за сегодня по уровню критичности</SummaryTitle>
              <Levels>
                {levels.map(([label, count, color]) => [
                  <dt key={label}>{label}</dt>,
                  <Bars key={`${label}-bars`} count={count} color={color} />,
                  <dd key={`${label}-count`}>0</dd>
                ])}
              </Levels>
            </SummaryCell>
          </Summary>
          <Panels>
            <RulesPanel />
            <IncidentsPanel />
          </Panels>
        </Content>
      </Workspace>
    </Body>
  </Page>
);

export default App;
